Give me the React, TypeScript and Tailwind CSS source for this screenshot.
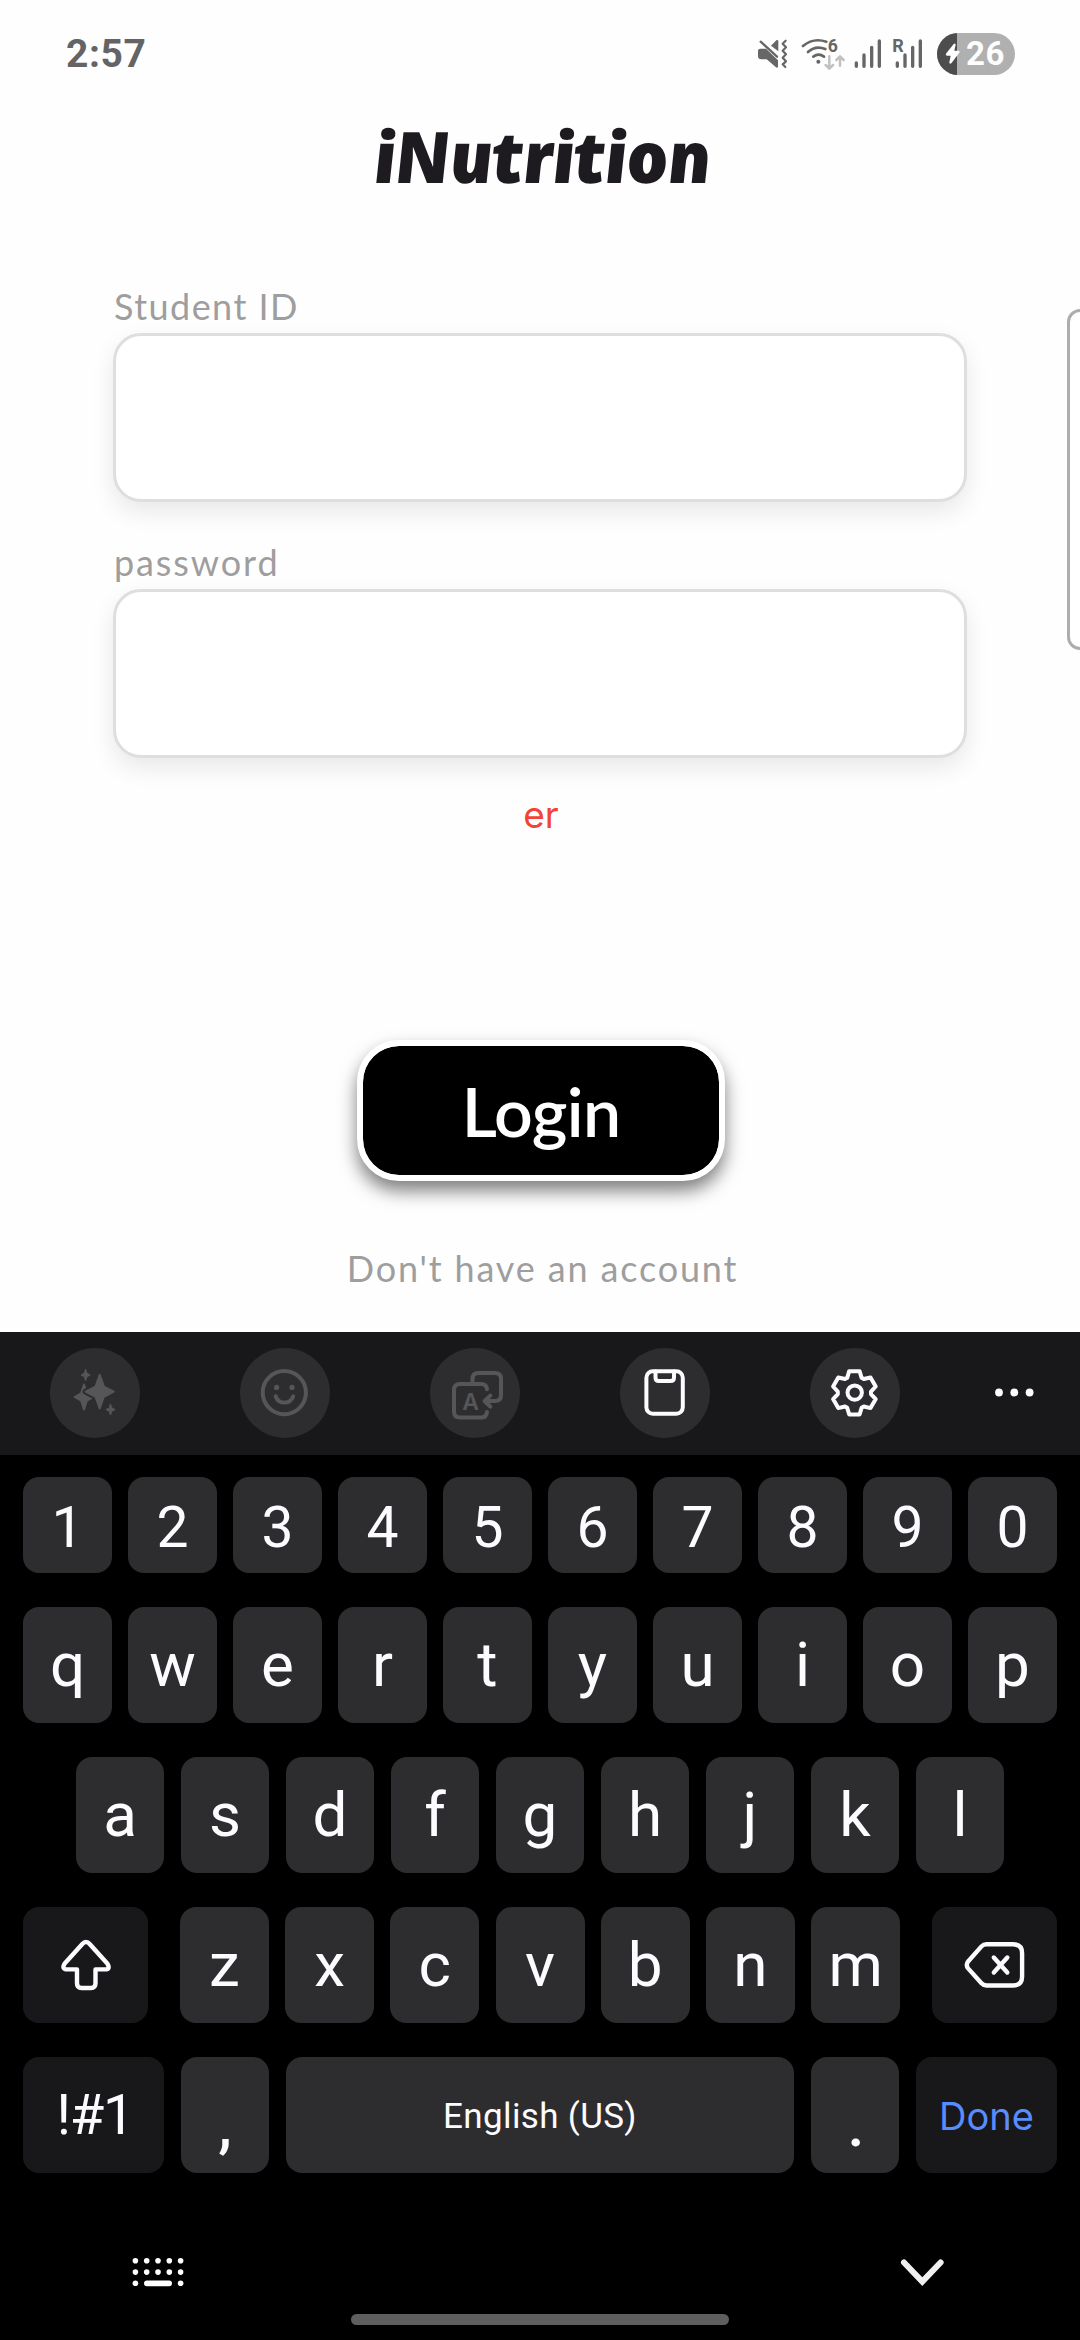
import React from "react";

const ROBOTO = "font-['Roboto',sans-serif]";
const LATO = "font-['Lato',sans-serif]";

function StatusBar() {
  return (
    <header className="flex h-[108px] items-center justify-between pr-[65px] pl-[66px]">
      <span className={`${ROBOTO} text-[39px] leading-[40px] font-bold tracking-[0.6px] text-[#646464]`}>2:57</span>
      <div className="flex items-center text-[#666]">
        <svg width="35" height="36" viewBox="102 78 105 108" fill="currentColor" stroke="currentColor">
          <path stroke="none" d="M108 123 Q108 116 116 116 H132 L168 151 V170 Q167 176 161 171 L134 148 H118 Q108 148 108 139 Z" />
          <path stroke="none" d="M147 107 L163 91 Q168 88 169 93 V124 Z" />
          <path fill="none" strokeWidth="7" strokeLinecap="round" d="M116 95 L165 140" />
          <path fill="none" strokeWidth="6.5" strokeLinecap="round" strokeLinejoin="round" d="M191 92 L182 101 L192 112 L182 122 L192 133 L182 143 L192 154 L182 163 L190 171" />
        </svg>
        <svg className="ml-[9px]" width="46" height="36" viewBox="238 78 138 108" fill="none" stroke="currentColor" strokeWidth="8" strokeLinecap="round">
          <path d="M247 108 Q278 82 317 95" />
          <path d="M262 126 Q285 105 314 117" />
          <path d="M278 140 Q294 128 310 140" />
          <circle cx="293" cy="155" r="6" fill="currentColor" stroke="none" />
          <path stroke="#c1c1c1" strokeWidth="7.5" strokeLinejoin="round" d="M326 139 V176 M315 165 L326 176 L337 165 M358 167 V140 M347 150 L358 139 L369 150" />
          <text x="321" y="125" fontFamily="Roboto, sans-serif" fontWeight="700" fontSize="53" fill="currentColor" stroke="none">6</text>
        </svg>
        <svg className="ml-[7px]" width="30" height="36" viewBox="398 78 90 108" stroke="currentColor" strokeWidth="10" strokeLinecap="round">
          <path d="M408 159 V169 M431 135 V169 M454 112 V169 M477 93 V169" />
        </svg>
        <svg className="ml-[8px]" width="34" height="36" viewBox="512 78 102 108" stroke="currentColor" strokeWidth="10" strokeLinecap="round">
          <path d="M531 159 V169 M554 135 V169 M577 112 V169 M600 93 V169" />
          <text x="516" y="125" fontFamily="Roboto, sans-serif" fontWeight="700" fontSize="54" fill="currentColor" stroke="#fefefe" strokeWidth="5" paintOrder="stroke">R</text>
        </svg>
        <div className="ml-[12px] flex h-[42px] w-[78px] items-center overflow-hidden rounded-full bg-[#b0b0b0]">
          <div className="h-full w-[20px] shrink-0 bg-[#4d4d4d]">
            <svg className="relative overflow-visible" width="20" height="42" viewBox="651 69 60 126" fill="#fefefe">
              <path d="M701 102 Q706 98 707 104 L703 122 H716 Q721 123 718 128 L694 160 Q688 164 688 157 L692 137 H681 Q675 136 679 130 Z" />
            </svg>
          </div>
          <span className={`${ROBOTO} ml-[9px] text-[33px] leading-[42px] font-bold tracking-[0.6px] text-[#fefefe]`}>26</span>
        </div>
      </div>
    </header>
  );
}

function Field({ label, tracking }: { label: string; tracking: string }) {
  return (
    <label className="block">
      <span className={`${LATO} block h-[54px] pl-px text-[36px] leading-[54px] text-[#9e9e9e] ${tracking}`}>{label}</span>
      <span className="block h-[169px] rounded-[28px] border-[3px] border-[#dedede] bg-white shadow-[0_10px_24px_rgba(0,0,0,0.09)]" />
    </label>
  );
}

function Tool({ children, dim }: { children: React.ReactNode; dim?: boolean }) {
  return (
    <button className={`size-[90px] rounded-full bg-[#2d2d2f] ${dim ? "text-[#565658]" : "text-[#fcfbff]"}`}>
      <svg width="90" height="90" viewBox="0 0 90 90" fill="none" stroke="currentColor" strokeWidth="4" strokeLinecap="round" strokeLinejoin="round">
        {children}
      </svg>
    </button>
  );
}

// Four-pointed star with slightly pinched sides.
function star(cx: number, cy: number, rx: number, ry: number) {
  const a = rx * 0.3;
  const b = ry * 0.3;
  return `M${cx} ${cy - ry} L${cx + a} ${cy - b} L${cx + rx} ${cy} L${cx + a} ${cy + b} L${cx} ${cy + ry} L${cx - a} ${cy + b} L${cx - rx} ${cy} L${cx - a} ${cy - b} Z`;
}

// Six-toothed gear outline, one tooth pointing up.
function gear(cx: number, cy: number) {
  const base = [[-7.2, -15], [-5.2, -21.6], [5.2, -21.6], [7.2, -15]];
  const pts: string[] = [];
  for (let k = 0; k < 6; k++) {
    const t = (k * Math.PI) / 3;
    for (const [x, y] of base) {
      pts.push(`${(cx + x * Math.cos(t) - y * Math.sin(t)).toFixed(2)},${(cy + x * Math.sin(t) + y * Math.cos(t)).toFixed(2)}`);
    }
  }
  return pts.join(" ");
}

function Toolbar() {
  return (
    <div className="flex h-[123px] items-start gap-[100px] bg-[#18181a] pt-[16px] pl-[50px]">
      <Tool dim>
        <g fill="currentColor" strokeWidth="2">
          <path d={star(34, 49, 9.5, 12.5)} />
          <path d={star(49.7, 43.7, 14, 16.8)} stroke="#2d2d2f" strokeWidth="6" />
          <path d={star(49.7, 43.7, 14, 16.8)} />
          <path strokeWidth="1" d={star(35.6, 27, 4.6, 5.6)} />
          <path strokeWidth="1" d={star(60.5, 61.6, 4.6, 5.4)} />
        </g>
      </Tool>
      <Tool dim>
        <circle cx="44.3" cy="44.6" r="21.6" />
        <circle cx="36.6" cy="39.4" r="2.6" fill="currentColor" stroke="none" />
        <circle cx="52" cy="39.4" r="2.6" fill="currentColor" stroke="none" />
        <path d="M35.7 48.4 Q38.2 54.6 44.4 54.6 Q50.6 54.6 53.2 48.4" />
      </Tool>
      <Tool dim>
        <path d="M57 41.2 Q56.6 36 51 36 H30 Q24 36 24 42 V63.5 Q24 69.5 30 69.5 H51 Q56.6 69.5 57 64" />
        <path d="M42.5 35 V31 Q42.5 25 48.5 25 H65 Q71 25 71 31 V47 Q71 53 65 53 H55.5 M60.3 47.6 L54.6 53 L60.3 58.6" />
        <text x="40.5" y="61.6" textAnchor="middle" fontFamily="Inter, sans-serif" fontWeight="600" fontSize="23" fill="currentColor" stroke="none">A</text>
      </Tool>
      <Tool>
        <rect x="26.4" y="23.2" width="36.4" height="42.6" rx="6.5" />
        <path d="M35.5 23.5 V29.5 Q35.5 33 39 33 H50.5 Q54 33 54 29.5 V23.5" />
      </Tool>
      <Tool>
        <polygon points={gear(44.4, 44.8)} />
        <circle cx="44.7" cy="44.6" r="7.2" />
      </Tool>
      <svg className="mt-[22px] -ml-[6px]" width="46" height="46" viewBox="991 1370 46 46" fill="#fcfbff">
        <circle cx="996" cy="1392.5" r="3.9" />
        <circle cx="1011.3" cy="1392.5" r="3.9" />
        <circle cx="1026.6" cy="1392.5" r="3.9" />
      </svg>
    </div>
  );
}

function Key({ children, className = "" }: { children: React.ReactNode; className?: string }) {
  return (
    <button className={`flex items-center justify-center rounded-[16px] leading-none text-[#fcfbff] ${className}`}>{children}</button>
  );
}

const LETTER = "h-[116px] w-[89px] bg-[#2d2d2f] text-[62px]";

function Keyboard() {
  return (
    <section className={`${ROBOTO} bg-black`}>
      <Toolbar />
      <div className="flex h-[885px] flex-col px-[23px] pt-[22px]">
        <div className="flex justify-between">
          {[..."1234567890"].map((k) => (
            <Key key={k} className="h-[96px] w-[89px] bg-[#2d2d2f] pt-[5px] text-[57px]">{k}</Key>
          ))}
        </div>
        <div className="mt-[34px] flex justify-between">
          {[..."qwertyuiop"].map((k) => (
            <Key key={k} className={LETTER}>{k}</Key>
          ))}
        </div>
        <div className="mt-[34px] flex justify-between px-[53px]">
          {[..."asdfghjkl"].map((k) => (
            <Key key={k} className="h-[116px] w-[88px] bg-[#2d2d2f] text-[62px]">{k}</Key>
          ))}
        </div>
        <div className="mt-[34px] flex justify-between">
          <Key className="h-[116px] w-[125px] bg-[#18181a]">
            <svg width="60" height="60" viewBox="55.5 1935 60 60" fill="none" stroke="currentColor" strokeWidth="4.4" strokeLinejoin="round">
              <path d="M81.6 1944.3 Q85.5 1939.8 89.4 1944.3 L107 1963.8 Q110.2 1969.4 104.5 1969.4 H95 V1983.3 Q95 1988 90.5 1988 H81 Q76.5 1988 76.5 1983.3 V1969.4 H67 Q60.8 1969.4 64 1963.8 Z" />
            </svg>
          </Key>
          <div className="flex gap-[16.2px]">
            {[..."zxcvbnm"].map((k) => (
              <Key key={k} className={LETTER}>{k}</Key>
            ))}
          </div>
          <Key className="h-[116px] w-[125px] bg-[#18181a]">
            <svg width="66" height="60" viewBox="961.5 1935 66 60" fill="none" stroke="currentColor" strokeWidth="4.4" strokeLinecap="round" strokeLinejoin="round">
              <path d="M986 1944.2 H1012.5 Q1021.6 1944.2 1021.6 1953.2 V1976.5 Q1021.6 1985.5 1012.5 1985.5 H986 Q983 1985.5 981 1983.3 L967.8 1968.6 Q964.8 1965 967.8 1961.2 L981 1946.4 Q983 1944.2 986 1944.2 Z" />
              <path d="M993.3 1957.5 L1006.8 1972.5 M1006.8 1957.5 L993.3 1972.5" />
            </svg>
          </Key>
        </div>
        <div className="mt-[34px] flex justify-between">
          <Key className="h-[116px] w-[141px] bg-[#18181a] pl-[3px] text-[56px] tracking-[-1.2px]">!#1</Key>
          <Key className="h-[116px] w-[88px] bg-[#2d2d2f] pt-[20px] text-[61px] font-medium">,</Key>
          <Key className="h-[116px] w-[508px] bg-[#2d2d2f] pt-[2px] text-[35px] tracking-[0.35px]">English (US)</Key>
          <Key className="h-[116px] w-[88px] bg-[#2d2d2f] pt-[20px] pl-[2px] text-[61px] font-medium">.</Key>
          <Key className="h-[116px] w-[141px] bg-[#18181a] pt-[2px] font-['Inter',sans-serif] text-[38px] !text-[#598dff]">Done</Key>
        </div>
        <div className="mt-[77px] flex items-center justify-between pr-[111px] pl-[107px]">
          <svg width="56" height="44" viewBox="130 2250 56 44" fill="white">
            {[2260.8, 2272.1, 2283.3].map((y, row) =>
              [135.4, 146.7, 158, 169.3, 180.6].map((x, col) =>
                row === 2 && col > 0 && col < 4 ? null : <circle key={`${x}-${y}`} cx={x} cy={y} r="2.8" />
              )
            )}
            <rect x="144" y="2280.4" width="28" height="5.8" rx="2.9" />
          </svg>
          <svg width="48" height="44" viewBox="897.5 2251 48 44" fill="none" stroke="#f1f0f1" strokeWidth="6" strokeLinecap="round">
            <path d="M903.5 2263.5 L921.8 2282.6 L940.1 2263.5" />
          </svg>
        </div>
        <div className="mx-auto mt-[20px] h-[11px] w-[378px] rounded-full bg-[#5e5e5e]" />
      </div>
    </section>
  );
}

export default function App() {
  return (
    <div className="relative h-[2340px] w-[1080px] overflow-hidden bg-[#fefefe]">
      <main className="h-[1332px]">
        <StatusBar />
        <h1 className="h-[96px] skew-x-[6deg] pl-[2px] text-center font-['Noto_Sans',sans-serif] text-[71px] leading-[96px] font-black tracking-[-1.6px] text-[#1d1b20] italic">iNutrition</h1>
        <div className="mt-[75px] flex flex-col gap-[33px] px-[113px]">
          <Field label="Student ID" tracking="tracking-[1.45px]" />
          <Field label="password" tracking="tracking-[1.9px]" />
        </div>
        <p className="mt-[32px] h-[50px] pl-[2px] text-center font-['Inter',sans-serif] text-[37px] leading-[50px] text-[#f44336]">er</p>
        <div className="mt-[200px] flex justify-center pl-[2px]">
          <button className={`${LATO} h-[141px] w-[368px] rounded-[42px] border-[6px] border-white bg-black bg-clip-padding pt-[1px] text-[68px] leading-none font-semibold tracking-[-0.7px] text-white shadow-[0_10px_18px_rgba(0,0,0,0.5)]`}>
            Login
          </button>
        </div>
        <p className={`${LATO} mt-[60px] pl-[5px] text-center text-[36px] leading-[54px] tracking-[1.85px] text-[#9e9e9e]`}>Don't have an account</p>
      </main>
      <Keyboard />
      <div className="absolute top-[309px] left-[1067px] h-[341px] w-[40px] rounded-[13px] border-[3px] border-[#adadad] bg-white" />
    </div>
  );
}
